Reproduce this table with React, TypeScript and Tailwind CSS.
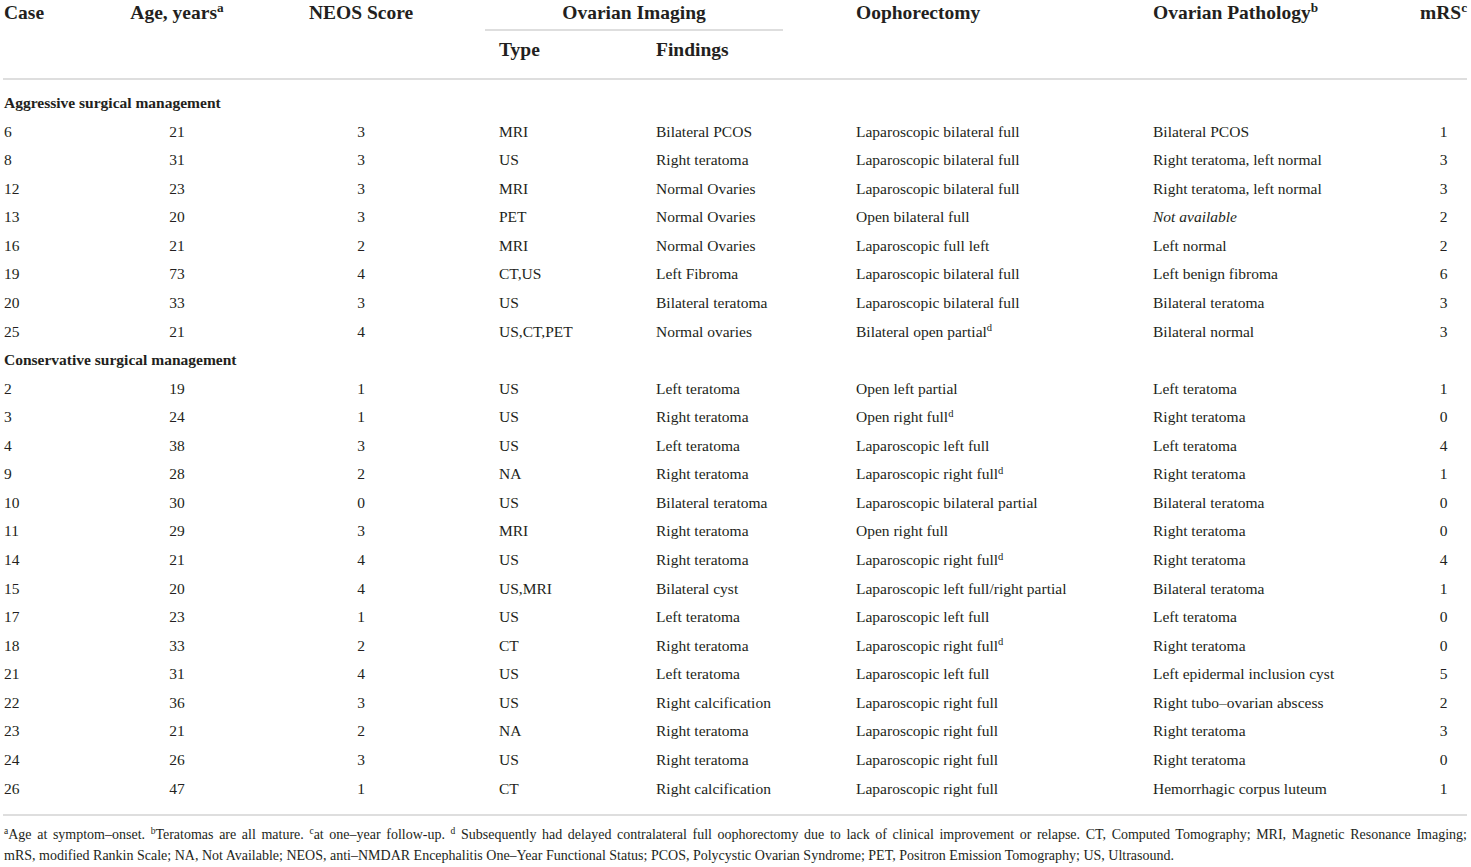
import React from 'react';

type Row = {
  c: string;
  age: string;
  neos: string;
  type: string;
  find: string;
  ooph: string;
  oophSup?: boolean;
  path: string;
  pathItalic?: boolean;
  mrs: string;
};

const aggressive: Row[] = [
  { c: '6', age: '21', neos: '3', type: 'MRI', find: 'Bilateral PCOS', ooph: 'Laparoscopic bilateral full', path: 'Bilateral PCOS', mrs: '1' },
  { c: '8', age: '31', neos: '3', type: 'US', find: 'Right teratoma', ooph: 'Laparoscopic bilateral full', path: 'Right teratoma, left normal', mrs: '3' },
  { c: '12', age: '23', neos: '3', type: 'MRI', find: 'Normal Ovaries', ooph: 'Laparoscopic bilateral full', path: 'Right teratoma, left normal', mrs: '3' },
  { c: '13', age: '20', neos: '3', type: 'PET', find: 'Normal Ovaries', ooph: 'Open bilateral full', path: 'Not available', pathItalic: true, mrs: '2' },
  { c: '16', age: '21', neos: '2', type: 'MRI', find: 'Normal Ovaries', ooph: 'Laparoscopic full left', path: 'Left normal', mrs: '2' },
  { c: '19', age: '73', neos: '4', type: 'CT,US', find: 'Left Fibroma', ooph: 'Laparoscopic bilateral full', path: 'Left benign fibroma', mrs: '6' },
  { c: '20', age: '33', neos: '3', type: 'US', find: 'Bilateral teratoma', ooph: 'Laparoscopic bilateral full', path: 'Bilateral teratoma', mrs: '3' },
  { c: '25', age: '21', neos: '4', type: 'US,CT,PET', find: 'Normal ovaries', ooph: 'Bilateral open partial', oophSup: true, path: 'Bilateral normal', mrs: '3' },
];

const conservative: Row[] = [
  { c: '2', age: '19', neos: '1', type: 'US', find: 'Left teratoma', ooph: 'Open left partial', path: 'Left teratoma', mrs: '1' },
  { c: '3', age: '24', neos: '1', type: 'US', find: 'Right teratoma', ooph: 'Open right full', oophSup: true, path: 'Right teratoma', mrs: '0' },
  { c: '4', age: '38', neos: '3', type: 'US', find: 'Left teratoma', ooph: 'Laparoscopic left full', path: 'Left teratoma', mrs: '4' },
  { c: '9', age: '28', neos: '2', type: 'NA', find: 'Right teratoma', ooph: 'Laparoscopic right full', oophSup: true, path: 'Right teratoma', mrs: '1' },
  { c: '10', age: '30', neos: '0', type: 'US', find: 'Bilateral teratoma', ooph: 'Laparoscopic bilateral partial', path: 'Bilateral teratoma', mrs: '0' },
  { c: '11', age: '29', neos: '3', type: 'MRI', find: 'Right teratoma', ooph: 'Open right full', path: 'Right teratoma', mrs: '0' },
  { c: '14', age: '21', neos: '4', type: 'US', find: 'Right teratoma', ooph: 'Laparoscopic right full', oophSup: true, path: 'Right teratoma', mrs: '4' },
  { c: '15', age: '20', neos: '4', type: 'US,MRI', find: 'Bilateral cyst', ooph: 'Laparoscopic left full/right partial', path: 'Bilateral teratoma', mrs: '1' },
  { c: '17', age: '23', neos: '1', type: 'US', find: 'Left teratoma', ooph: 'Laparoscopic left full', path: 'Left teratoma', mrs: '0' },
  { c: '18', age: '33', neos: '2', type: 'CT', find: 'Right teratoma', ooph: 'Laparoscopic right full', oophSup: true, path: 'Right teratoma', mrs: '0' },
  { c: '21', age: '31', neos: '4', type: 'US', find: 'Left teratoma', ooph: 'Laparoscopic left full', path: 'Left epidermal inclusion cyst', mrs: '5' },
  { c: '22', age: '36', neos: '3', type: 'US', find: 'Right calcification', ooph: 'Laparoscopic right full', path: 'Right tubo–ovarian abscess', mrs: '2' },
  { c: '23', age: '21', neos: '2', type: 'NA', find: 'Right teratoma', ooph: 'Laparoscopic right full', path: 'Right teratoma', mrs: '3' },
  { c: '24', age: '26', neos: '3', type: 'US', find: 'Right teratoma', ooph: 'Laparoscopic right full', path: 'Right teratoma', mrs: '0' },
  { c: '26', age: '47', neos: '1', type: 'CT', find: 'Right calcification', ooph: 'Laparoscopic right full', path: 'Hemorrhagic corpus luteum', mrs: '1' },
];

const cols = 'grid grid-cols-[123px_102px_266px_162px_200px_297px_267px_47px]';

function Sup({ children }: { children: React.ReactNode }) {
  return <sup className="text-[0.68em] -top-[0.5em]">{children}</sup>;
}

function GroupLabel({ label }: { label: string }) {
  return <div className="h-[28.57px] leading-[28.57px] pl-[1px] font-bold whitespace-nowrap">{label}</div>;
}

function DataRow({ r }: { r: Row }) {
  return (
    <div className={`${cols} h-[28.57px] leading-[28.57px] whitespace-nowrap`}>
      <div className="pl-[1px]">{r.c}</div>
      <div className="text-center">{r.age}</div>
      <div className="text-center">{r.neos}</div>
      <div className="pl-[5px]">{r.type}</div>
      <div>{r.find}</div>
      <div>
        {r.ooph}
        {r.oophSup && <Sup>d</Sup>}
      </div>
      <div className={r.pathItalic ? 'italic' : ''}>{r.path}</div>
      <div className="text-center">{r.mrs}</div>
    </div>
  );
}

export default function App() {
  return (
    <div className="w-[1471px] h-[867px] bg-white overflow-hidden text-[#231f20] font-['Liberation_Serif',serif]">
      <div className="ml-[3px] w-[1464px]">
        {/* Header */}
        <div className="border-b-2 border-[#dedede] text-[19.5px] font-bold whitespace-nowrap">
          <div className={`${cols} h-[31px] leading-[26px]`}>
            <div className="pl-[1px]">Case</div>
            <div className="text-center">
              Age, years<Sup>a</Sup>
            </div>
            <div className="text-center">NEOS Score</div>
            <div className="col-span-2">
              <div className="-ml-[9px] w-[298px] h-full border-b-2 border-[#dedede] text-center">Ovarian Imaging</div>
            </div>
            <div>Oophorectomy</div>
            <div>
              Ovarian Pathology<Sup>b</Sup>
            </div>
            <div className="text-center">
              mRS<Sup>c</Sup>
            </div>
          </div>
          <div className={`${cols} h-[47px] leading-[38px]`}>
            <div />
            <div />
            <div />
            <div className="pl-[5px]">Type</div>
            <div>Findings</div>
            <div />
            <div />
            <div />
          </div>
        </div>

        {/* Body */}
        <div className="pt-[9px] pb-[11px] border-b-2 border-[#dedede] text-[15.5px]">
          <GroupLabel label="Aggressive surgical management" />
          {aggressive.map((r) => (
            <DataRow key={r.c} r={r} />
          ))}
          <GroupLabel label="Conservative surgical management" />
          {conservative.map((r) => (
            <DataRow key={r.c} r={r} />
          ))}
        </div>

        {/* Footnotes */}
        <div className="pt-[8px] text-[14px] leading-[21px] pl-[1px]">
          <div className="text-justify [text-align-last:justify]">
            <Sup>a</Sup>Age at symptom–onset. <Sup>b</Sup>Teratomas are all mature. <Sup>c</Sup>at one–year follow-up.{' '}
            <Sup>d</Sup> Subsequently had delayed contralateral full oophorectomy due to lack of clinical improvement or
            relapse. CT, Computed Tomography; MRI, Magnetic Resonance Imaging;
          </div>
          <div className="whitespace-nowrap">
            mRS, modified Rankin Scale; NA, Not Available; NEOS, anti–NMDAR Encephalitis One–Year Functional Status; PCOS,
            Polycystic Ovarian Syndrome; PET, Positron Emission Tomography; US, Ultrasound.
          </div>
        </div>
      </div>
    </div>
  );
}
